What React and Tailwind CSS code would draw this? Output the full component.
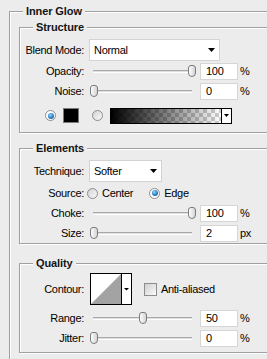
import React from "react";

const etched = "border-[#a0a0a0] shadow-[inset_1px_1px_0_#fff,1px_1px_0_#fff]";

function Title({ children }) {
  return (
    <div className="-mt-[7px] flex h-[13px]">
      <div className="w-[13px] shrink-0" />
      <div className="bg-[#ececec] px-[3px] font-bold leading-[13px] tracking-[-0.1px] text-[#141414]">
        {children}
      </div>
    </div>
  );
}

function Group({ title, className, children }) {
  return (
    <div className={`ml-[9px] w-[262px] border ${etched} ${className}`}>
      <Title>{title}</Title>
      {children}
    </div>
  );
}

function Label({ children }) {
  return <div className="w-[64px] shrink-0 text-right">{children}</div>;
}

function Arrow() {
  return (
    <svg width="7" height="4" viewBox="0 0 7 4" className="shrink-0">
      <polygon points="0,0 7,0 3.5,4" fill="#000" />
    </svg>
  );
}

function Select({ value, width }) {
  return (
    <div
      className={`ml-[5px] flex h-[22px] items-center justify-between border border-[#d3d3d3] bg-white pl-[4px] pr-[4px] ${width}`}
    >
      <span>{value}</span>
      <Arrow />
    </div>
  );
}

function Radio({ on }) {
  return (
    <span
      className={`flex h-[11px] w-[11px] shrink-0 items-center justify-center rounded-full border border-[#8a8c8e] ${
        on ? "bg-white" : "bg-[linear-gradient(135deg,#d2d2d2,#fbfbfb)]"
      }`}
    >
      {on && (
        <span className="h-[6px] w-[6px] rounded-full bg-[radial-gradient(circle_at_40%_35%,#8fd3ff,#1368b0_70%)]" />
      )}
    </span>
  );
}

function SliderRow({ label, value, unit, pos }) {
  return (
    <div className="flex h-[20px] items-center">
      <Label>{label}</Label>
      <div className="relative ml-[5px] h-[20px] w-[109px]">
        <div className="absolute left-[4px] top-[9px] h-[3px] w-[99px] border-t border-b border-t-[#a9a9a9] border-b-white bg-[#dedede]" />
        <div
          className="absolute top-[4px] h-[12px] w-[8px] rounded-t-[3px] rounded-b-[4px] border border-[#7b7b7b] bg-[linear-gradient(to_right,#fdfdfd,#d4d4d4)]"
          style={{ left: 1 + pos * 0.98 }}
        />
      </div>
      <div className="ml-[2px] flex h-[17px] w-[38px] items-center border border-[#d6d6d6] bg-white pl-[5px]">
        {value}
      </div>
      <span className="ml-[2px]">{unit}</span>
    </div>
  );
}

export default function App() {
  return (
    <div className="h-[359px] w-[267px] overflow-hidden bg-[#ececec] pl-[9px] pt-[11px] font-['Liberation_Sans',Arial,sans-serif] text-[11px] leading-[13px] tracking-[-0.3px] text-black">
      <div className={`w-[400px] border-l border-t ${etched} pb-[20px]`}>
        <Title>Inner Glow</Title>

        <Group title="Structure" className="mt-[9px] pb-[9px]">
          <div className="mt-[5px] flex items-center">
            <Label>Blend Mode:</Label>
            <Select value="Normal" width="w-[131px]" />
          </div>
          <SliderRow label="Opacity:" value="100" unit="%" pos={100} />
          <SliderRow label="Noise:" value="0" unit="%" pos={0} />
          <div className="mt-[7px] flex h-[15px] items-center pl-[25px]">
            <Radio on />
            <div className="ml-[7px] h-[15px] w-[16px] border border-[#7a7a7a] bg-black" />
            <div className="ml-[13px]">
              <Radio />
            </div>
            <div className="ml-[7px] flex h-[16px] w-[122px] border border-black">
              <div className="h-full flex-1 [background:linear-gradient(to_right,#000,rgba(0,0,0,0)),repeating-conic-gradient(#cdcdcd_0_25%,#fff_0_50%)_0_0/8px_8px]" />
              <div className="flex w-[10px] items-start justify-center border-l border-black bg-white pt-[5px]">
                <svg width="5" height="3" viewBox="0 0 5 3">
                  <polygon points="0,0 5,0 2.5,3" fill="#000" />
                </svg>
              </div>
            </div>
          </div>
        </Group>

        <Group title="Elements" className="mt-[15px]">
          <div className="mt-[5px] flex items-center">
            <Label>Technique:</Label>
            <Select value="Softer" width="w-[73px]" />
          </div>
          <div className="mt-[1px] flex h-[20px] items-center">
            <Label>Source:</Label>
            <span className="ml-[3px]">
              <Radio />
            </span>
            <span className="ml-[4px]">Center</span>
            <span className="ml-[16px]">
              <Radio on />
            </span>
            <span className="ml-[4px]">Edge</span>
          </div>
          <SliderRow label="Choke:" value="100" unit="%" pos={100} />
          <SliderRow label="Size:" value="2" unit="px" pos={0} />
        </Group>

        <Group title="Quality" className="mt-[19px] pb-[4px]">
          <div className="mt-[3px] flex items-center">
            <Label>Contour:</Label>
            <svg width="42" height="32" viewBox="0 0 42 32" className="ml-[6px]">
              <rect x="0.5" y="0.5" width="41" height="31" fill="#fff" stroke="#000" />
              <polygon points="1,31 31,1 31,31" fill="#a3a3a3" />
              <line x1="31.5" y1="0" x2="31.5" y2="32" stroke="#000" />
              <polygon points="34,15 39,15 36.5,17.5" fill="#000" />
            </svg>
            <div className="ml-[12px] h-[13px] w-[13px] border border-[#8a8c8e] bg-[linear-gradient(135deg,#d0d0d0,#fafafa)]" />
            <span className="ml-[4px]">Anti-aliased</span>
          </div>
          <div className="mt-[3px]">
            <SliderRow label="Range:" value="50" unit="%" pos={50} />
          </div>
          <SliderRow label="Jitter:" value="0" unit="%" pos={0} />
        </Group>
      </div>
    </div>
  );
}
